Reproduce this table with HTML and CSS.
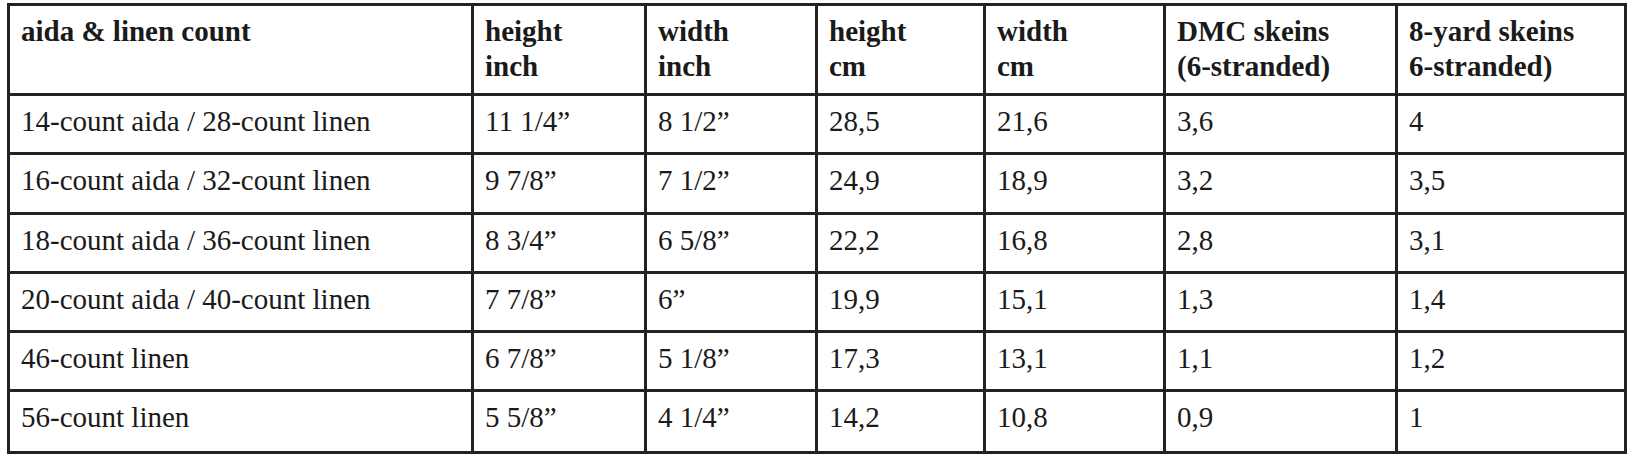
FILE: index.html
```html
<!DOCTYPE html>
<html lang="en">
<head>
    <meta charset="UTF-8">
    <title>Fabric count table</title>
    <link rel="stylesheet" href="styles.css">
</head>
<body>
    <table class="count-table">
        <colgroup>
            <col class="c-fabric">
            <col class="c-hin">
            <col class="c-win">
            <col class="c-hcm">
            <col class="c-wcm">
            <col class="c-dmc">
            <col class="c-yard">
        </colgroup>
        <thead>
            <tr>
                <th>aida &amp; linen count</th>
                <th>height<br>inch</th>
                <th>width<br>inch</th>
                <th>height<br>cm</th>
                <th>width<br>cm</th>
                <th>DMC skeins<br>(6-stranded)</th>
                <th>8-yard skeins<br>6-stranded)</th>
            </tr>
        </thead>
        <tbody>
            <tr>
                <td>14-count aida / 28-count linen</td>
                <td>11 1/4”</td>
                <td>8 1/2”</td>
                <td>28,5</td>
                <td>21,6</td>
                <td>3,6</td>
                <td>4</td>
            </tr>
            <tr class="row-wide">
                <td>16-count aida / 32-count linen</td>
                <td>9 7/8”</td>
                <td>7 1/2”</td>
                <td>24,9</td>
                <td>18,9</td>
                <td>3,2</td>
                <td>3,5</td>
            </tr>
            <tr>
                <td>18-count aida / 36-count linen</td>
                <td>8 3/4”</td>
                <td>6 5/8”</td>
                <td>22,2</td>
                <td>16,8</td>
                <td>2,8</td>
                <td>3,1</td>
            </tr>
            <tr>
                <td>20-count aida / 40-count linen</td>
                <td>7 7/8”</td>
                <td>6”</td>
                <td>19,9</td>
                <td>15,1</td>
                <td>1,3</td>
                <td>1,4</td>
            </tr>
            <tr>
                <td>46-count linen</td>
                <td>6 7/8”</td>
                <td>5 1/8”</td>
                <td>17,3</td>
                <td>13,1</td>
                <td>1,1</td>
                <td>1,2</td>
            </tr>
            <tr class="row-last">
                <td>56-count linen</td>
                <td>5 5/8”</td>
                <td>4 1/4”</td>
                <td>14,2</td>
                <td>10,8</td>
                <td>0,9</td>
                <td>1</td>
            </tr>
        </tbody>
    </table>
</body>
</html>
```

FILE: styles.css
```css
/* base */
body {
    margin: 0;
    padding: 3px 0 0 7px;
    background: #fff;
    font-family: 'Liberation Serif', 'DejaVu Serif', serif;
    color: #1a1a1a;
}

.count-table {
    border-collapse: collapse;
    table-layout: fixed;
    width: 1620px;
    font-size: 29px;
    line-height: 35px;
}

.c-fabric { width: 464px; }
.c-hin { width: 173px; }
.c-win { width: 171px; }
.c-hcm { width: 168px; }
.c-wcm { width: 180px; }
.c-dmc { width: 232px; }
.c-yard { width: 229px; }

.count-table th,
.count-table td {
    border: 3px solid #222;
    padding: 8px 8px 0 11px;
    text-align: left;
    vertical-align: top;
    white-space: nowrap;
    box-sizing: border-box;
}

.count-table th {
    font-weight: bold;
    height: 90px;
}

.count-table td {
    font-weight: normal;
    height: 59px;
}

.count-table .row-wide td {
    height: 60px;
}

.count-table .row-last td {
    height: 62px;
}
```
